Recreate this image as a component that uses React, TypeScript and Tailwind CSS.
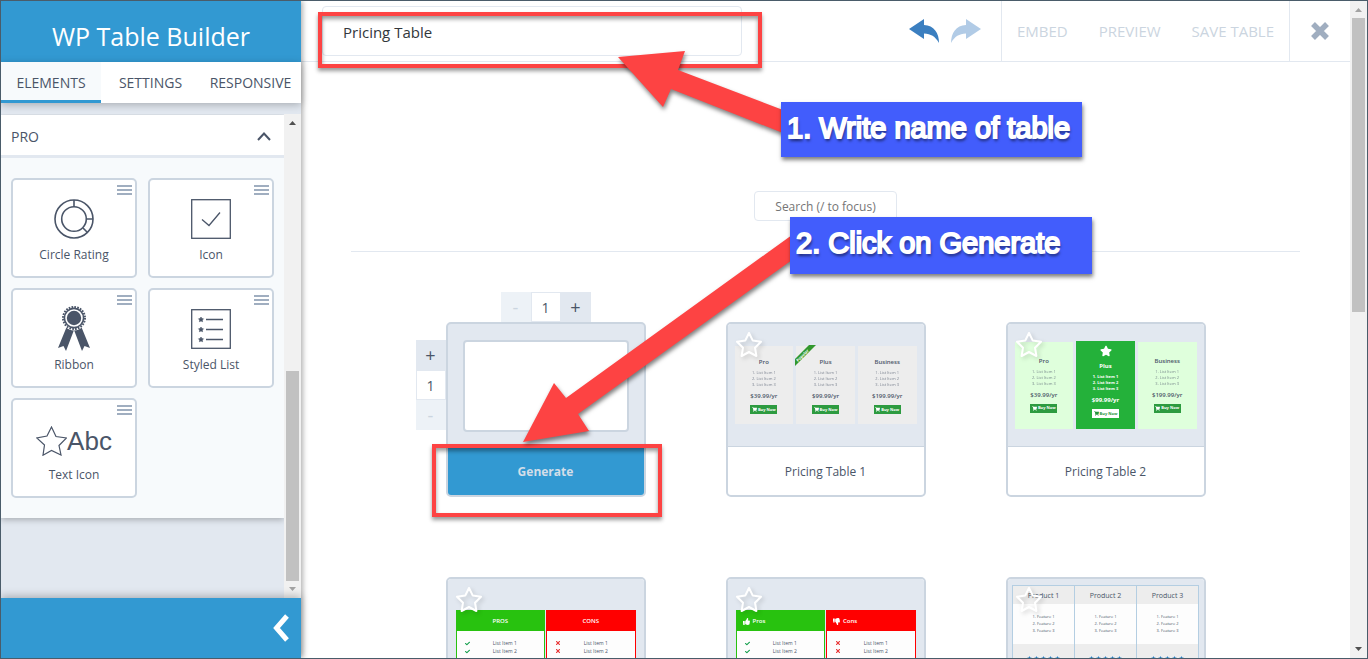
import React, { useState } from "react";
import { FaCheck, FaShoppingCart, FaStar, FaThumbsDown, FaThumbsUp, FaTimes } from "react-icons/fa";

const elements = [
  { name: "Circle Rating", icon: <CircleRatingIcon /> },
  { name: "Icon", icon: <CheckBoxIcon /> },
  { name: "Ribbon", icon: <RibbonIcon /> },
  { name: "Styled List", icon: <StyledListIcon /> },
  { name: "Text Icon", icon: <TextIcon /> },
];

const plans = [
  { name: "Pro", price: "$39.99/yr" },
  { name: "Plus", price: "$99.99/yr" },
  { name: "Business", price: "$199.99/yr" },
];

function CircleRatingIcon() {
  return (
    <svg width="40" height="40" viewBox="0 0 40 40" fill="none" stroke="#4a5568" strokeWidth="1.6">
      <circle cx="20" cy="20" r="19" />
      <circle cx="20" cy="20" r="12.3" />
      <path d="M20 1v7M32 20h7M29 29l4.500 4.500" />
    </svg>
  );
}

function CheckBoxIcon() {
  return (
    <svg width="40" height="40" viewBox="0 0 40 40" fill="none" stroke="#4a5568" strokeWidth="1.300">
      <rect x="0.700" y="0.700" width="38.600" height="38.600" />
      <path d="M11 20.500l7 6L29 13.500" />
    </svg>
  );
}

function RibbonIcon() {
  return (
    <svg width="34" height="48" viewBox="0 0 34 48" fill="#4a5568">
      <path d="M10 21l7 4-8 21-2.500-5L1 43zM24 21l-7 4 8 21 2.500-5L33 43z" />
      <circle cx="17" cy="13" r="12.500" fill="#fff" />
      <circle cx="17" cy="13" r="11" fill="none" stroke="#4a5568" strokeWidth="2" strokeDasharray="1.700 1.180" />
      <circle cx="17" cy="13" r="9.600" fill="none" stroke="#4a5568" strokeWidth="1.600" />
      <circle cx="17" cy="13" r="7.200" />
    </svg>
  );
}

function StyledListIcon() {
  const star = "l.8 1.600 1.700.2-1.200 1.200.3 1.700-1.600-.8-1.600.8.3-1.700-1.200-1.200 1.700-.2z";
  return (
    <svg width="40" height="40" viewBox="0 0 40 40" fill="none" stroke="#4a5568" strokeWidth="1.300">
      <rect x="0.700" y="0.700" width="38.600" height="38.600" />
      <path d="M15 10.500h17M15 20.500h17M15 30.500h17" />
      <path d={`M10 8${star}M10 18${star}M10 28${star}`} fill="#4a5568" strokeWidth="0.600" />
    </svg>
  );
}

function TextIcon() {
  return (
    <div className="flex items-center pt-1 text-[26px] leading-8 font-['Liberation_Sans',sans-serif] text-[#4a5568]">
      <svg width="31" height="30" viewBox="0 0 31 30" fill="none" stroke="#4a5568" strokeWidth="1.200">
        <path d="M15.500 1L20 10.500 30.500 12 23 19.500 25 29 15.500 24.500 7 29.200 8.500 19 .8 12 11 10z" />
      </svg>
      Abc
    </div>
  );
}

function Arrow({ className }: { className?: string }) {
  return (
    <svg width="30" height="24" viewBox="0 0 30 24" fill="currentColor" className={className}>
      <path d="M0 10L15 0v6C25 6.500 30 14 30 24 26 17 22 15 15 14.500V20z" />
    </svg>
  );
}

function Scrollbar({ thumb, top }: { thumb: string; top?: boolean }) {
  return (
    <div className="flex w-[17px] shrink-0 flex-col items-center bg-[#f1f1f1]">
      <svg width="17" height="17" className="shrink-0" fill={top ? "#a3a3a3" : "#505050"}>
        <path d="M5 11h7L8.500 7z" />
      </svg>
      {!top && <div className="flex-1" />}
      <div className={`w-[13px] bg-[#c1c1c1] ${thumb}`} />
      {top && <div className="flex-1" />}
      <svg width="17" height="17" className="shrink-0" fill={top ? "#505050" : "#a3a3a3"}>
        <path d="M5 6h7l-3.500 4z" />
      </svg>
    </div>
  );
}

function Sidebar() {
  return (
    <aside className="relative z-10 flex w-[300px] shrink-0 flex-col bg-[#e2e8f0] shadow-[2px_0_5px_rgba(0,0,0,0.3)]">
      <h1 className="flex h-[61px] shrink-0 items-center justify-center bg-[#3299d2] pt-[10px] text-[25px] text-white">
        WP Table Builder
      </h1>
      <nav className="relative z-10 flex h-[41px] shrink-0 bg-white text-[14px] text-[#4a5568] shadow-[0_2px_8px_rgba(0,0,0,0.25)]">
        <button className="w-[100px] border-b-3 border-[#3299d2] bg-[#f7fafc] pt-[3px]">ELEMENTS</button>
        <button className="flex-1">SETTINGS</button>
        <button className="w-[101px]">RESPONSIVE</button>
      </nav>
      <div className="mt-[11px] flex min-h-0 flex-1">
        <div className="min-w-0 flex-1 overflow-hidden">
          <section className="mt-px bg-[#f7fafc] shadow-[0_2px_6px_rgba(0,0,0,0.25)]">
            <button className="flex h-[43px] w-full items-center justify-between border-b-3 border-[#e2e8f0] bg-white pt-[3px] pr-[13px] pl-[10px] text-[14px] text-[#4a5568]">
              PRO
              <svg width="14" height="9" fill="none" stroke="#4a5568" strokeWidth="2">
                <path d="M1 8l6-6.500L13 8" />
              </svg>
            </button>
            <div className="grid grid-cols-2 gap-x-[11px] gap-y-[10px] px-[10px] py-5">
              {elements.map((item) => (
                <div
                  key={item.name}
                  className="relative flex h-[100px] flex-col items-center rounded-[5px] border-2 border-[#cbd5e0] bg-white pt-[15px] text-[12px] text-[#4a5568]"
                >
                  <svg className="absolute top-[5px] right-[3px]" width="15" height="11" fill="#a0aec0">
                    <path d="M0 0h15v2H0zM0 4h15v2H0zM0 8h15v2H0z" />
                  </svg>
                  <div className="flex h-[48px] items-center">{item.icon}</div>
                  <span className="leading-6">{item.name}</span>
                </div>
              ))}
            </div>
          </section>
        </div>
        <Scrollbar thumb="h-[210px]" />
      </div>
      <footer className="relative flex h-[60px] shrink-0 items-center justify-end bg-[#3299d2] pr-3 shadow-[0_-2px_8px_rgba(0,0,0,0.25)]">
        <button aria-label="Collapse panel">
          <svg width="16" height="28" fill="none" stroke="#fff" strokeWidth="5">
            <path d="M14 2L3.500 14 14 26" />
          </svg>
        </button>
      </footer>
    </aside>
  );
}

function Header() {
  const [name, setName] = useState("Pricing Table");
  return (
    <header className="flex h-[61px] shrink-0 border-b border-[#e2e8f0]">
      <div className="flex flex-1 items-center pl-[21px]">
        <input
          aria-label="Table name"
          value={name}
          onChange={(e) => setName(e.target.value)}
          className="h-[50px] w-[420px] rounded-[4px] border border-[#e2e8f0] px-5 pt-[2px] text-[15px] text-[#32373c]"
        />
      </div>
      <div className="flex items-center gap-3 pr-5">
        <button aria-label="Undo" className="text-[#3b7fc0]">
          <Arrow />
        </button>
        <button aria-label="Redo" className="text-[#b1cbe6]">
          <Arrow className="-scale-x-100" />
        </button>
      </div>
      <div className="flex w-[288px] items-center justify-between border-l border-[#e2e8f0] px-[15px] text-[15px] text-[#cbd5e0]">
        <button>EMBED</button>
        <button>PREVIEW</button>
        <button>SAVE TABLE</button>
      </div>
      <button aria-label="Close" className="flex w-[61px] items-center justify-center border-l border-[#e2e8f0]">
        <svg width="18" height="18" stroke="#a0aec0" strokeWidth="5.500">
          <path d="M2 2l14 14M16 2L2 16" />
        </svg>
      </button>
    </header>
  );
}

function Card({ title, preview }: { title?: string; preview: React.ReactNode }) {
  return (
    <article className="relative h-[175px] w-[200px] overflow-hidden rounded-[5px] border-2 border-[#cbd5e0] bg-white">
      <div className="flex h-[123px] items-center justify-center overflow-hidden border-b border-[#cbd5e0] bg-[#e2e8f0]">
        {preview}
      </div>
      {title && (
        <h3 className="flex h-[50px] items-center justify-center text-[12px] text-[#4a5568]">{title}</h3>
      )}
      <svg
        className="absolute top-2 left-2 drop-shadow-[2px_2px_2px_rgba(0,0,0,0.15)]"
        width="26"
        height="26"
        viewBox="0 0 26 26"
        fill="none"
        stroke="#fff"
        strokeWidth="2"
        strokeLinejoin="round"
      >
        <path d="M13 1l3.800 7.600 8.200 1.200-6 5.900 1.400 8.300L13 20l-7.400 4L7 15.700 1 9.800l8.200-1.200z" />
      </svg>
    </article>
  );
}

function PricingPreview({ green }: { green?: boolean }) {
  return (
    <div className="flex w-[182px] items-center gap-[3px] text-[#4a5568]">
      {plans.map((plan) => {
        const featured = green && plan.name === "Plus";
        return (
          <div
            key={plan.name}
            className={`relative flex flex-1 flex-col items-center ${
              featured ? "h-[88px] bg-[#24b13a] pt-1 text-white" : green ? "h-[87px] bg-[#dfffdc] pt-[13px]" : "h-[78px] bg-[#ededed] pt-[10px]"
            }`}
          >
            {featured && <FaStar size={12} className="mb-[3px]" />}
            {!green && plan.name === "Plus" && (
              <svg className="absolute -top-px -left-px" width="21" height="21">
                <path d="M0 14L14 0h7L0 21z" fill="#32982e" />
                <text x="3" y="17" transform="rotate(-45 3 17)" fontSize="4" fontWeight="700" fill="#fff">
                  Popular
                </text>
              </svg>
            )}
            <b className={`text-[6px] leading-[12px] ${featured ? "" : "font-semibold"}`}>{plan.name}</b>
            <ol className={`mt-[2px] text-[4px] leading-[6px] ${featured ? "font-bold" : "opacity-70"}`}>
              {[1, 2, 3].map((n) => (
                <li key={n}>{`${n}. List Item ${n}`}</li>
              ))}
            </ol>
            <b className={`mt-1 text-[6px] leading-[8px] ${featured ? "" : "font-semibold"}`}>{plan.price}</b>
            <span
              className={`mt-[5px] flex h-[9px] w-[27px] shrink-0 items-center justify-center gap-px text-[4px] font-bold ${
                featured ? "bg-white text-[#24943a]" : "bg-[#2d9b40] text-white"
              }`}
            >
              <FaShoppingCart size={5} /> Buy Now
            </span>
          </div>
        );
      })}
    </div>
  );
}

function ProsConsPreview({ icons }: { icons?: boolean }) {
  const columns = [
    { label: "Pros", head: "bg-[#28c20f]", line: "border-[#28c20f]", thumb: <FaThumbsUp size={7} />, mark: <FaCheck size={5} color="#0c9c46" /> },
    { label: "Cons", head: "bg-[#ff0000]", line: "border-[#ff0000]", thumb: <FaThumbsDown size={7} />, mark: <FaTimes size={6} color="#e83030" /> },
  ];
  return (
    <div className="mt-[31px] flex w-[180px] gap-px self-start">
      {columns.map((col) => (
        <div key={col.label} className={`h-[90px] flex-1 border bg-[#fdfdfd] ${col.line}`}>
          <div
            className={`flex h-[20px] items-center text-[6px] font-semibold text-white ${col.head} ${
              icons ? "gap-[3px] pl-[6px]" : "justify-center uppercase"
            }`}
          >
            {icons && col.thumb}
            {col.label}
          </div>
          <ul className="pt-2 text-[5px] leading-[8px] text-[#4a5568]">
            {[1, 2].map((n) => (
              <li key={n} className="flex items-center pl-2">
                {col.mark}
                <span className="flex-1 pr-1 text-center">List Item {n}</span>
              </li>
            ))}
          </ul>
        </div>
      ))}
    </div>
  );
}

function ProductPreview() {
  return (
    <div className="mt-[6px] flex w-[187px] self-start border border-[#b4cee2] text-[#4a5568]">
      {[1, 2, 3].map((n) => (
        <div key={n} className="flex-1 border-[#b4cee2] bg-[#fdfdfd] text-center not-first:border-l">
          <div className="h-[18px] bg-[#ededed] text-[7px] leading-[20px]">Product {n}</div>
          <ol className="h-[40px] pt-[9px] text-[4px] leading-[7px]">
            {[1, 2, 3].map((i) => (
              <li key={i}>{`${i}. Feature ${i}`}</li>
            ))}
          </ol>
          <div className="flex h-[50px] justify-center gap-[2px] bg-[#ededed] pt-3 text-[#2c7fc0]">
            {[1, 2, 3, 4, 5].map((i) => (
              <FaStar key={i} size={5} />
            ))}
          </div>
        </div>
      ))}
    </div>
  );
}

const step = "flex h-[30px] w-[30px] items-center justify-center text-[18px]";
const stepValue = "h-[30px] w-[30px] border border-[#e2e8f0] bg-white text-center text-[14px]";

function GenerateCard() {
  const [cols, setCols] = useState(1);
  const [rows, setRows] = useState(1);
  return (
    <article className="relative h-[175px] w-[200px] rounded-[5px] border-2 border-[#cbd5e0] bg-[#e2e8f0] text-[#4a5568]">
      <div className="absolute bottom-full left-[53px] mb-[2px] flex">
        <button className={`${step} bg-[#edf2f7] text-[#cbd5e0]`} onClick={() => setCols(Math.max(1, cols - 1))}>
          -
        </button>
        <input aria-label="Columns" className={stepValue} value={cols} readOnly />
        <button className={`${step} bg-[#e2e8f0]`} onClick={() => setCols(cols + 1)}>
          +
        </button>
      </div>
      <div className="absolute top-4 right-full mr-[2px] flex flex-col">
        <button className={`${step} bg-[#e2e8f0]`} onClick={() => setRows(rows + 1)}>
          +
        </button>
        <input aria-label="Rows" className={stepValue} value={rows} readOnly />
        <button className={`${step} bg-[#edf2f7] text-[#cbd5e0]`} onClick={() => setRows(Math.max(1, rows - 1))}>
          -
        </button>
      </div>
      <div className="flex h-[123px] items-center justify-center">
        <div className="h-[92px] w-[166px] rounded-[4px] border-2 border-[#cbd5e0] bg-white" />
      </div>
      <button className="flex h-[48px] w-full items-center justify-center rounded-b-[3px] bg-[#3299d2] pt-[2px] text-[12px] font-bold text-[#d3dee9]">
        Generate
      </button>
    </article>
  );
}

// Tutorial callouts drawn on top of the builder.
function Annotations() {
  const box = "absolute border-4 border-[#fd4343] shadow-[0_3px_4px_rgba(0,0,0,0.4),inset_0_3px_4px_rgba(0,0,0,0.4)]";
  const label =
    "absolute bg-[#425dfc] pl-[6px] text-[29px] leading-[52px] whitespace-nowrap text-white shadow-[1px_3px_4px_rgba(0,0,0,0.5)] font-['Liberation_Sans',sans-serif] [-webkit-text-stroke:2px_white] [text-shadow:1px_3px_3px_rgba(0,0,0,0.6)]";
  return (
    <div className="pointer-events-none absolute inset-0 z-20">
      <div className={`${box} top-[12px] left-[318px] h-[56px] w-[444px]`} />
      <div className={`${box} top-[444px] left-[432px] h-[73px] w-[230px]`} />
      <svg className="absolute inset-0 h-full w-full drop-shadow-[1px_3px_2px_rgba(0,0,0,0.5)]" fill="#fd4343">
        <path d="M618 57L685 51 678 70 783 110V133L671 89 663 107z" />
        <path d="M523 442L554 383 566 398 792 235V260L578 414 589 431z" />
      </svg>
      <div className={`${label} top-[102px] left-[781px] h-[55px] w-[301px]`}>1. Write name of table</div>
      <div className={`${label} top-[217px] left-[790px] h-[57px] w-[302px]`}>2. Click on Generate</div>
    </div>
  );
}

export default function App() {
  return (
    <div className="relative flex h-screen overflow-hidden border border-[#4a5c6a] bg-white font-['Open_Sans',sans-serif]">
      <Sidebar />
      <div className="flex min-w-0 flex-1 flex-col overflow-hidden">
        <Header />
        <main className="flex min-h-0 flex-1 flex-col overflow-hidden px-[50px] pt-[129px]">
          <input
            type="text"
            aria-label="Search"
            placeholder="Search (/ to focus)"
            className="h-[30px] w-[143px] shrink-0 self-center rounded-[4px] border border-[#e2e8f0] text-center text-[12px] text-[#4a5568] placeholder:text-[#757575]"
          />
          <hr className="mt-[30px] border-[#e2e8f0]" />
          <div className="mt-[70px] flex flex-wrap justify-center gap-20">
            <GenerateCard />
            <Card title="Pricing Table 1" preview={<PricingPreview />} />
            <Card title="Pricing Table 2" preview={<PricingPreview green />} />
            <Card preview={<ProsConsPreview />} />
            <Card preview={<ProsConsPreview icons />} />
            <Card preview={<ProductPreview />} />
          </div>
        </main>
      </div>
      <Scrollbar top thumb="h-[294px]" />
      <div className="absolute -top-px -left-px h-screen w-screen">
        <Annotations />
      </div>
    </div>
  );
}
